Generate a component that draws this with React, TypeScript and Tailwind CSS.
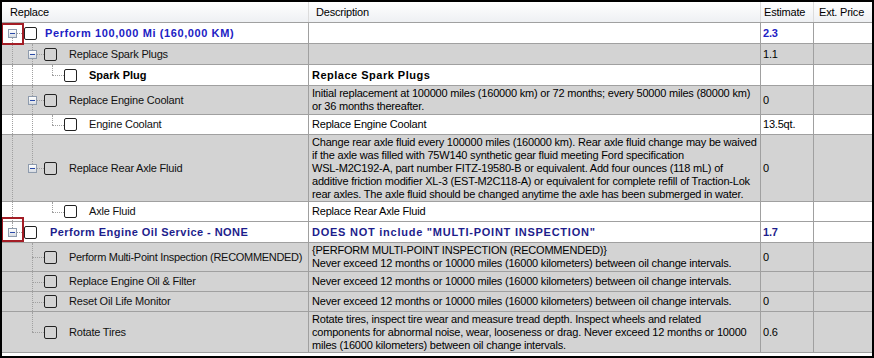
import React from "react";

type Seg = [number, "full" | "top" | "bottom"];

type Row = {
  level: number;
  box?: boolean;
  text: string;
  tone?: "blue" | "navy" | "bold";
  tr?: string;
  pad?: string;
  desc: string[];
  descTone?: "navy" | "bold";
  descTr?: string;
  est: string;
  estTone?: "blue" | "navy";
  gray: boolean;
  h: string;
  segs: Seg[];
};

const rows: Row[] = [
  {
    level: 0,
    box: true,
    text: "Perform 100,000 Mi (160,000 KM)",
    tone: "blue",
    tr: "tracking-[0.6px]",
    desc: [],
    est: "2.3",
    estTone: "blue",
    gray: false,
    h: "h-[21px]",
    segs: [[0, "bottom"]],
  },
  { level: 1, box: true, text: "Replace Spark Plugs", desc: [], est: "1.1", gray: true, h: "h-[21px]", segs: [[0, "full"], [1, "full"]] },
  {
    level: 2,
    text: "Spark Plug",
    tone: "bold",
    tr: "tracking-normal",
    desc: ["Replace Spark Plugs"],
    descTone: "bold",
    descTr: "tracking-[0.5px]",
    est: "",
    gray: false,
    h: "h-[21px]",
    segs: [[0, "full"], [1, "full"], [2, "top"]],
  },
  {
    level: 1,
    box: true,
    text: "Replace Engine Coolant",
    desc: ["Initial replacement at 100000 miles (160000 km) or 72 months; every 50000 miles (80000 km)", "or 36 months thereafter."],
    est: "0",
    gray: true,
    h: "h-[29px]",
    segs: [[0, "full"], [1, "full"]],
  },
  { level: 2, text: "Engine Coolant", desc: ["Replace Engine Coolant"], est: "13.5qt.", gray: false, h: "h-[20px]", segs: [[0, "full"], [1, "full"], [2, "top"]] },
  {
    level: 1,
    box: true,
    text: "Replace Rear Axle Fluid",
    desc: [
      "Change rear axle fluid every 100000 miles (160000 km). Rear axle fluid change may be waived",
      "if the axle was filled with 75W140 synthetic gear fluid meeting Ford specification",
      "WSL-M2C192-A, part number FITZ-19580-B or equivalent. Add four ounces (118 mL) of",
      "additive friction modifier XL-3 (EST-M2C118-A) or equivalent for complete refill of Traction-Lok",
      "rear axles. The axle fluid should be changed anytime the axle has been submerged in water.",
    ],
    est: "0",
    gray: true,
    h: "h-[67px]",
    segs: [[0, "full"], [1, "top"]],
  },
  { level: 2, text: "Axle Fluid", desc: ["Replace Rear Axle Fluid"], est: "", gray: false, h: "h-[20px]", segs: [[0, "full"], [2, "top"]] },
  {
    level: 0,
    box: true,
    text: "Perform Engine Oil Service - NONE",
    tone: "navy",
    tr: "tracking-[0.45px]",
    pad: "pl-[48px]",
    desc: ['DOES NOT include "MULTI-POINT INSPECTION"'],
    descTone: "navy",
    descTr: "tracking-[0.75px]",
    est: "1.7",
    estTone: "navy",
    gray: false,
    h: "h-[21px]",
    segs: [[0, "top"]],
  },
  {
    level: 1,
    text: "Perform Multi-Point Inspection (RECOMMENDED)",
    tr: "tracking-[-0.3px]",
    desc: ["{PERFORM MULTI-POINT INSPECTION (RECOMMENDED)}", "Never exceed 12 months or 10000 miles (16000 kilometers) between oil change intervals."],
    est: "0",
    gray: true,
    h: "h-[29px]",
    segs: [[1, "full"]],
  },
  {
    level: 1,
    text: "Replace Engine Oil & Filter",
    desc: ["Never exceed 12 months or 10000 miles (16000 kilometers) between oil change intervals."],
    est: "",
    gray: true,
    h: "h-[20px]",
    segs: [[1, "full"]],
  },
  {
    level: 1,
    text: "Reset Oil Life Monitor",
    desc: ["Never exceed 12 months or 10000 miles (16000 kilometers) between oil change intervals."],
    est: "0",
    gray: true,
    h: "h-[20px]",
    segs: [[1, "full"]],
  },
  {
    level: 1,
    text: "Rotate Tires",
    desc: [
      "Rotate tires, inspect tire wear and measure tread depth. Inspect wheels and related",
      "components for abnormal noise, wear, looseness or drag. Never exceed 12 months or 10000",
      "miles (16000 kilometers) between oil change intervals.",
    ],
    est: "0.6",
    gray: true,
    h: "h-[41px]",
    segs: [[1, "top"]],
  },
];

const lineLeft = ["left-[10px]", "left-[30px]", "left-[50px]"];
const boxLeft = ["left-[6px]", "left-[26px]", "left-[46px]"];
const cbLeft = ["left-[22px]", "left-[42px]", "left-[62px]"];
const textPad = ["pl-[43px]", "pl-[67px]", "pl-[87px]"];
const segSpan = { full: "top-0 bottom-0", top: "top-0 h-1/2", bottom: "top-1/2 bottom-0" };

const toneCls = {
  blue: "font-bold text-[#2121c4]",
  navy: "font-bold text-[#1d1d8c]",
  bold: "font-bold text-black",
};

function ExpandBox({ level }: { level: number }) {
  return (
    <div className={`absolute inset-y-0 ${boxLeft[level]} flex items-center`}>
      <div className="relative w-[9px] h-[9px] border border-[#8e9bad] bg-linear-to-b from-white to-[#d6dbe2]">
        <div className="absolute left-[1px] top-[3px] w-[5px] h-px bg-[#2a4aa8]" />
      </div>
    </div>
  );
}

function TreeCell({ r }: { r: Row }) {
  return (
    <div className={`relative flex items-center border-r border-[#a0a0a0] ${r.pad ?? textPad[r.level]}`}>
      {r.segs.map(([lv, kind], i) => (
        <div key={i} className={`absolute ${lineLeft[lv]} ${segSpan[kind]} border-l border-dotted border-[#a0a0a0]`} />
      ))}
      <div className={`absolute top-1/2 ${lineLeft[r.level]} w-[12px] border-t border-dotted border-[#a0a0a0]`} />
      {r.box && <ExpandBox level={r.level} />}
      <div className={`absolute inset-y-0 ${cbLeft[r.level]} flex items-center`}>
        <div className="w-[13px] h-[13px] border border-[#222] rounded-[2px]" />
      </div>
      <span className={`whitespace-nowrap ${r.tone ? toneCls[r.tone] : "text-[#111]"} ${r.tr ?? ""}`}>{r.text}</span>
    </div>
  );
}

export default function App() {
  return (
    <div className="relative w-[874px] h-[358px] overflow-hidden border-2 border-black bg-white font-['Liberation_Sans',Arial,sans-serif] text-[11px] leading-[13px] tracking-[-0.2px] text-black">
      <div className="grid grid-cols-[307px_452px_53px_1fr] h-[21px] border-b border-[#a0a0a0] bg-linear-to-b from-white to-[#eef0f3]">
        <div className="flex items-center pl-[8px] border-r border-[#dcdcdc]">Replace</div>
        <div className="flex items-center pl-[7px] border-r border-[#dcdcdc]">Description</div>
        <div className="flex items-center pl-[3px] border-r border-[#dcdcdc]">Estimate</div>
        <div className="flex items-center pl-[5px]">Ext. Price</div>
      </div>

      {rows.map((r, i) => (
        <div
          key={i}
          className={`grid grid-cols-[307px_452px_53px_1fr] ${r.h} border-b border-[#a0a0a0] ${r.gray ? "bg-[#d3d3d3]" : "bg-white"}`}
        >
          <TreeCell r={r} />
          <div className="flex flex-col justify-center pl-[3px] border-r border-[#a0a0a0]">
            {r.desc.map((line, j) => (
              <div key={j} className={`whitespace-nowrap ${r.descTone ? toneCls[r.descTone] : ""} ${r.descTr ?? ""}`}>
                {line}
              </div>
            ))}
          </div>
          <div className={`flex items-center pl-[2px] border-r border-[#a0a0a0] ${r.estTone ? toneCls[r.estTone] : ""}`}>
            {r.est}
          </div>
          <div />
        </div>
      ))}

      <div className="absolute left-[-1px] top-[21px] w-[23px] h-[22px] border-2 border-[#a31d25]" />
      <div className="absolute left-[-1px] top-[215px] w-[23px] h-[25px] border-2 border-[#a31d25]" />
    </div>
  );
}
